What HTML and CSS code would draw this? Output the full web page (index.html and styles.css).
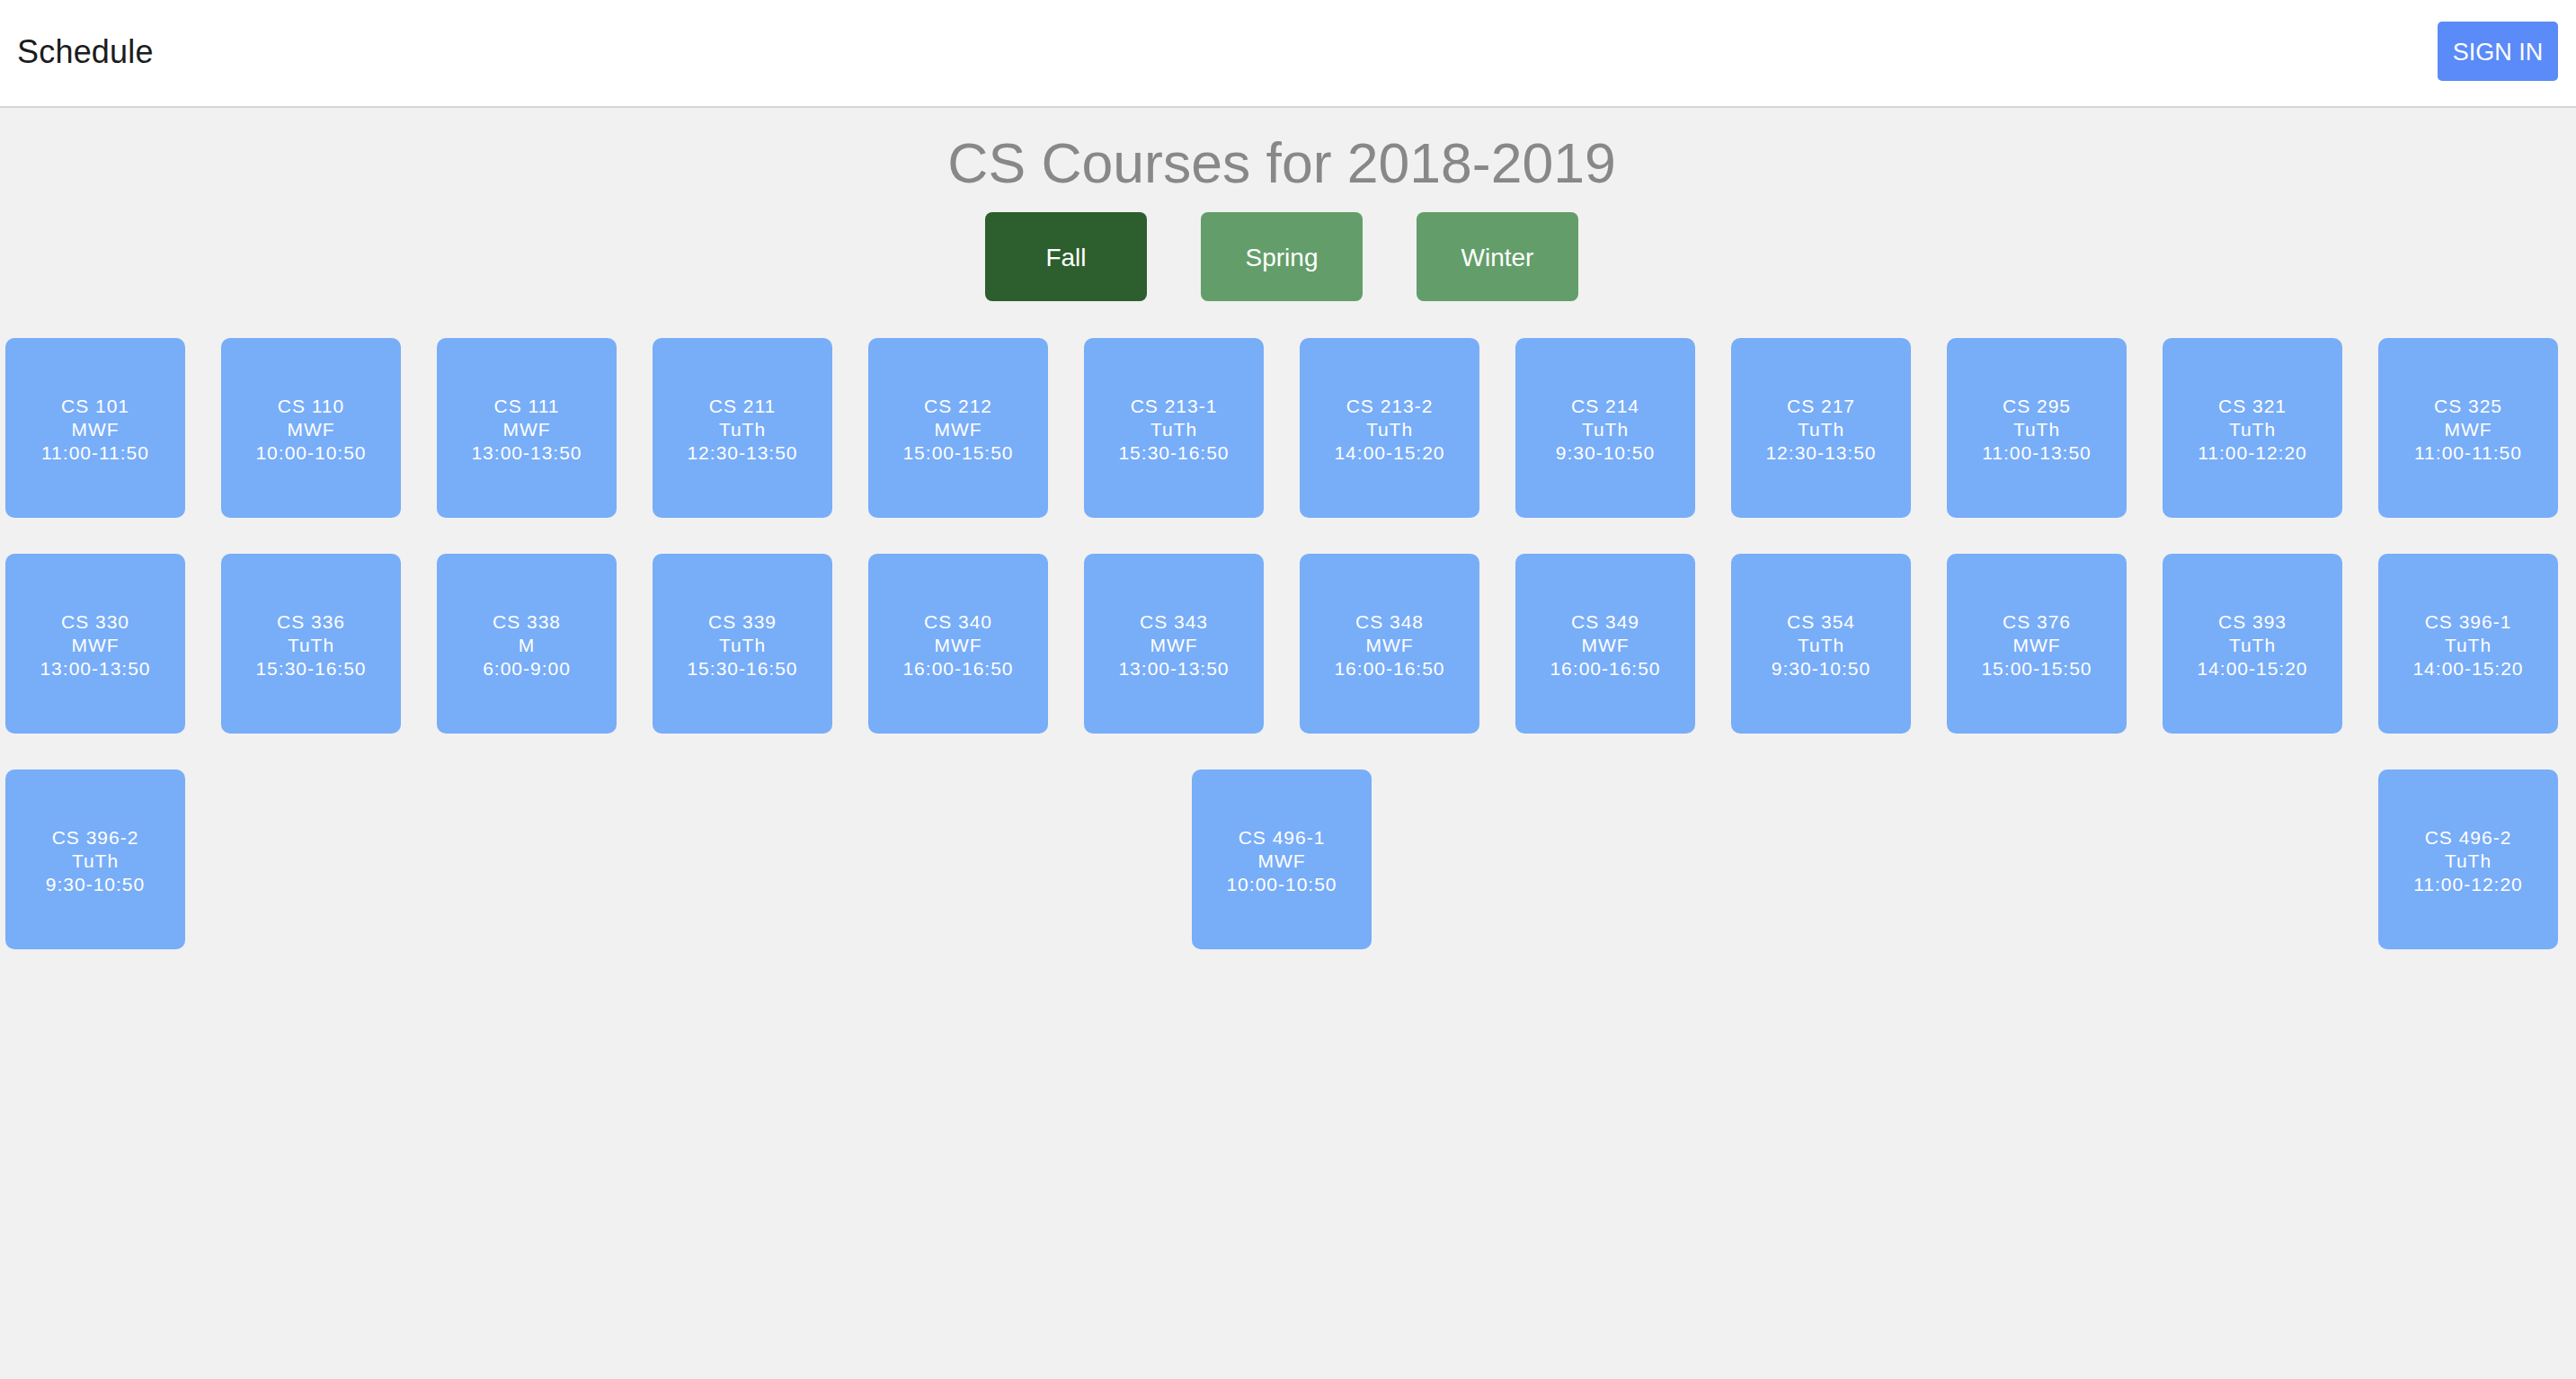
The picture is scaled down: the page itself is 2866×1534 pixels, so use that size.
FILE: index.html
```html
<!DOCTYPE html>
<html lang="en">
<head>
<meta charset="utf-8">
<title>Schedule</title>
<link rel="stylesheet" href="styles.css">
</head>
<body>
<header class="topbar">
  <div class="brand">Schedule</div>
  <button class="signin">SIGN IN</button>
</header>
<main class="page">
  <h1 class="title">CS Courses for 2018-2019</h1>
  <div class="terms">
    <button class="term term-active">Fall</button>
    <button class="term">Spring</button>
    <button class="term">Winter</button>
  </div>
  <div class="courses">
    <div class="course">CS 101<br>MWF<br>11:00-11:50</div>
    <div class="course">CS 110<br>MWF<br>10:00-10:50</div>
    <div class="course">CS 111<br>MWF<br>13:00-13:50</div>
    <div class="course">CS 211<br>TuTh<br>12:30-13:50</div>
    <div class="course">CS 212<br>MWF<br>15:00-15:50</div>
    <div class="course">CS 213-1<br>TuTh<br>15:30-16:50</div>
    <div class="course">CS 213-2<br>TuTh<br>14:00-15:20</div>
    <div class="course">CS 214<br>TuTh<br>9:30-10:50</div>
    <div class="course">CS 217<br>TuTh<br>12:30-13:50</div>
    <div class="course">CS 295<br>TuTh<br>11:00-13:50</div>
    <div class="course">CS 321<br>TuTh<br>11:00-12:20</div>
    <div class="course">CS 325<br>MWF<br>11:00-11:50</div>
    <div class="course">CS 330<br>MWF<br>13:00-13:50</div>
    <div class="course">CS 336<br>TuTh<br>15:30-16:50</div>
    <div class="course">CS 338<br>M<br>6:00-9:00</div>
    <div class="course">CS 339<br>TuTh<br>15:30-16:50</div>
    <div class="course">CS 340<br>MWF<br>16:00-16:50</div>
    <div class="course">CS 343<br>MWF<br>13:00-13:50</div>
    <div class="course">CS 348<br>MWF<br>16:00-16:50</div>
    <div class="course">CS 349<br>MWF<br>16:00-16:50</div>
    <div class="course">CS 354<br>TuTh<br>9:30-10:50</div>
    <div class="course">CS 376<br>MWF<br>15:00-15:50</div>
    <div class="course">CS 393<br>TuTh<br>14:00-15:20</div>
    <div class="course">CS 396-1<br>TuTh<br>14:00-15:20</div>
    <div class="course">CS 396-2<br>TuTh<br>9:30-10:50</div>
    <div class="course">CS 496-1<br>MWF<br>10:00-10:50</div>
    <div class="course">CS 496-2<br>TuTh<br>11:00-12:20</div>
  </div>
</main>
</body>
</html>
```
FILE: styles.css
```css
* { box-sizing: border-box; }
html, body {
  margin: 0;
  padding: 0;
  background: #f1f1f1;
  font-family: "Liberation Sans", Arial, sans-serif;
}
.topbar {
  height: 120px;
  background: #ffffff;
  border-bottom: 2px solid #d6d6d6;
  display: flex;
  align-items: center;
  justify-content: space-between;
  padding: 0 20px 2px 19px;
}
.brand {
  font-size: 36px;
  color: #1c1c1c;
  letter-spacing: 0.2px;
}
.signin {
  width: 134px;
  height: 66px;
  margin-top: -2px;
  border: none;
  border-radius: 5px;
  background: #5a8bf8;
  color: #ffffff;
  font-family: "Liberation Sans", Arial, sans-serif;
  font-size: 27px;
  padding: 2px 0 0 0;
}
.page {
  width: 2852px;
  padding-top: 24px;
}
.title {
  margin: 0;
  text-align: center;
  font-size: 62.5px;
  line-height: 74px;
  font-weight: normal;
  color: #888888;
}
.terms {
  display: flex;
  justify-content: center;
  gap: 60px;
  margin-top: 18px;
}
.term {
  width: 180px;
  height: 99px;
  border: none;
  border-radius: 8px;
  background: #639e6a;
  color: #ffffff;
  font-family: "Liberation Sans", Arial, sans-serif;
  font-size: 28px;
  padding: 3px 0 0 0;
}
.term-active {
  background: #2c5e2e;
}
.courses {
  display: flex;
  flex-wrap: wrap;
  justify-content: space-between;
  column-gap: 40px;
  row-gap: 40px;
  margin: 41px 6px 0 6px;
}
.course {
  width: 200px;
  height: 200px;
  border-radius: 10px;
  background: #78adf8;
  color: #ffffff;
  font-size: 21px;
  line-height: 26px;
  letter-spacing: 1px;
  text-align: center;
  display: flex;
  align-items: center;
  justify-content: center;
  padding-top: 4px;
}
```
